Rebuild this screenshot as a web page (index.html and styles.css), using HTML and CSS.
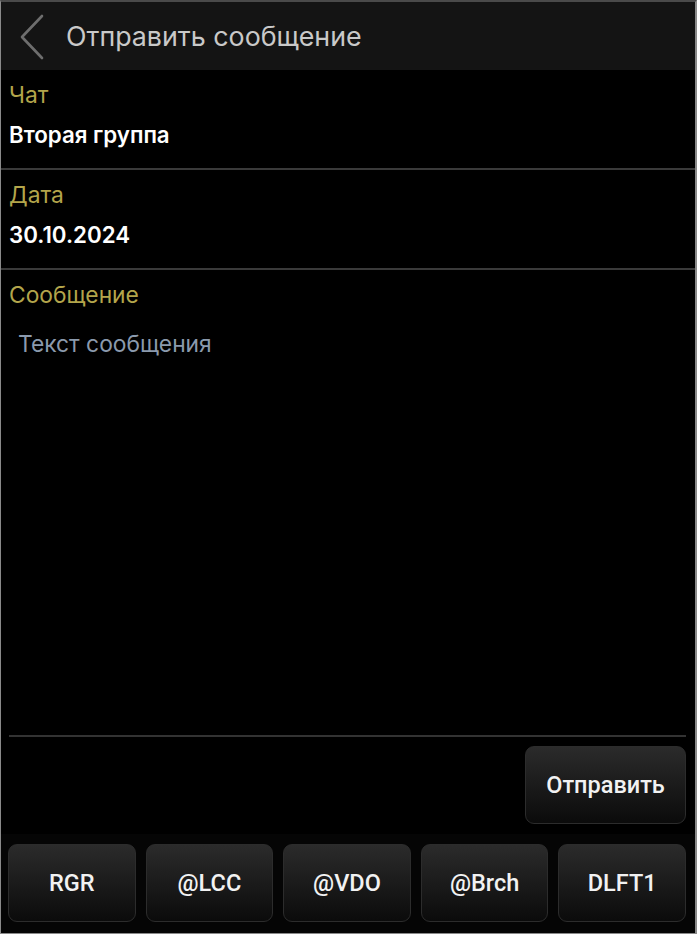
FILE: index.html
```html
<!DOCTYPE html>
<html lang="ru">
<head>
<meta charset="utf-8">
<title>Отправить сообщение</title>
<link rel="stylesheet" href="styles.css">
</head>
<body>
<div class="frame">
  <header class="topbar">
    <svg class="back" width="28" height="46" viewBox="0 0 28 46"><path d="M24 2 L4 23 L24 44" fill="none" stroke="#6e6e6e" stroke-width="2.6" stroke-linecap="round" stroke-linejoin="round"/></svg>
    <h1 class="title">Отправить сообщение</h1>
  </header>
  <main class="content">
    <section class="field">
      <div class="label">Чат</div>
      <div class="value">Вторая группа</div>
    </section>
    <div class="divider"></div>
    <section class="field">
      <div class="label">Дата</div>
      <div class="value">30.10.2024</div>
    </section>
    <div class="divider"></div>
    <section class="message">
      <div class="label">Сообщение</div>
      <div class="textarea"><span class="placeholder">Текст сообщения</span></div>
      <div class="send-row"><button class="btn send">Отправить</button></div>
    </section>
  </main>
  <footer class="quick">
    <button class="btn qbtn">RGR</button>
    <button class="btn qbtn">@LCC</button>
    <button class="btn qbtn">@VDO</button>
    <button class="btn qbtn">@Brch</button>
    <button class="btn qbtn">DLFT1</button>
  </footer>
</div>
</body>
</html>
```

FILE: styles.css
```css
* { box-sizing: border-box; }
html, body { margin: 0; padding: 0; background: #000; }
body { font-family: Inter, "Noto Sans", sans-serif; }
.frame {
  width: 697px;
  height: 934px;
  border-top: 2px solid #4a4a4a;
  border-right: 2px solid #8a8a8a;
  border-bottom: 1px solid #8a8a8a;
  border-left: 1px solid #8a8a8a;
  background: #000;
  display: flex;
  flex-direction: column;
}
.topbar {
  height: 68px;
  background: #141414;
  display: flex;
  align-items: center;
  padding-left: 17px;
  flex-shrink: 0;
}
.back { display: block; margin-top: 1px; }
.title {
  margin: 0 0 0 20px;
  font-size: 26.8px;
  font-weight: 400;
  color: #c9c9c9;
}
.content { flex: 1; display: flex; flex-direction: column; }
.field { padding: 14px 0 0 8px; height: 98px; }
.label { font-size: 22.8px; line-height: 22px; color: #b3a54b; }
.value { margin-top: 18px; font-size: 22.3px; line-height: 22px; font-weight: 600; color: #fff; }
.divider { height: 2px; background: #3a3a3a; }
.message { flex: 1; display: flex; flex-direction: column; padding: 14px 9px 10px 8px; }
.textarea {
  flex: 1;
  border-bottom: 2px solid #333;
  padding: 27px 0 0 9px;
}
.placeholder { font-size: 22.8px; line-height: 22px; color: #8b9aad; }
.send-row { display: flex; justify-content: flex-end; padding-top: 9px; }
.btn {
  font-family: Roboto, "Noto Sans", sans-serif;
  color: #f2f2f2;
  font-weight: 500;
  font-size: 23.5px;
  border: 1px solid #2c2c2c;
  border-radius: 9px;
  background: linear-gradient(#2b2b2b, #0b0b0b);
  cursor: pointer;
}
.send { width: 161px; height: 78px; }
.quick {
  background: #050505;
  display: grid;
  grid-template-columns: repeat(5, 1fr);
  gap: 10px;
  padding: 10px 9px 11px 7px;
  flex-shrink: 0;
}
.qbtn { height: 78px; }
```
